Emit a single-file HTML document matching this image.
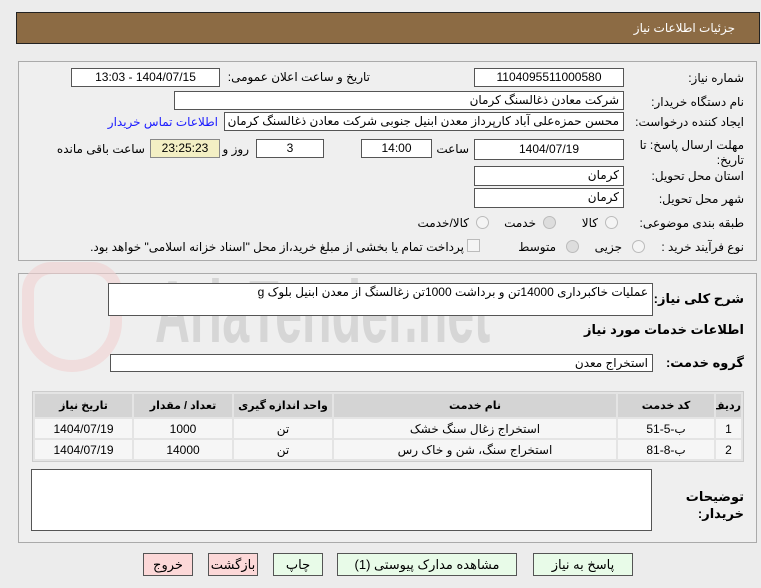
<!DOCTYPE html>
<html><head><meta charset="utf-8"><style>
body{margin:0;width:761px;height:588px;background:#ececec;font-family:"Liberation Sans","DejaVu Sans",sans-serif;font-size:12px;color:#000;position:relative;overflow:hidden;direction:rtl}
.a{position:absolute;white-space:nowrap}
.box{position:absolute;background:#fff;border:1px solid #555;box-sizing:border-box;font-size:12px;line-height:16px;padding:0 4px;white-space:nowrap;overflow:hidden}
.c{text-align:center}
.lbl{position:absolute;white-space:nowrap;font-size:12px}
.rad{position:absolute;width:11px;height:11px;border-radius:50%;border:1px solid #bbb;background:#f4f4f4}
table{border-collapse:separate;border-spacing:2px;position:absolute;left:32px;top:391px;width:712px;background:#e4e4e4;border:1px solid #ccc;table-layout:fixed}
th{background:#d4d4d4;height:23px;font-size:11px;white-space:nowrap;overflow:hidden;padding:0}
td{background:#f6f6f6;height:19px;text-align:center;font-size:12px;padding:0}
.btn{position:absolute;top:553px;height:23px;border:1px solid #555;box-sizing:border-box;font-size:13px;text-align:center;line-height:21px;background:#e8fbe8}
</style></head><body>
<div class="a" style="left:16px;top:12px;width:744px;height:32px;background:#8c6b44;border:1px solid #222;box-sizing:border-box"></div>
<div class="a" style="right:26px;top:21px;color:#fff;font-size:12px">جزئیات اطلاعات نیاز</div>

<div class="a" style="left:18px;top:61px;width:739px;height:200px;border:1px solid #aaa;background:#efefef;box-sizing:border-box"></div>
<div class="lbl" style="right:17px;top:71px">شماره نیاز:</div>
<div class="box c" style="left:474px;top:68px;width:150px;height:19px">1104095511000580</div>
<div class="lbl" style="right:391px;top:70px">تاریخ و ساعت اعلان عمومی:</div>
<div class="box c" style="left:71px;top:68px;width:149px;height:19px">1404/07/15 - 13:03</div>
<div class="lbl" style="right:17px;top:95px">نام دستگاه خریدار:</div>
<div class="box" style="left:174px;top:91px;width:450px;height:19px">شرکت معادن ذغالسنگ کرمان</div>
<div class="lbl" style="right:17px;top:115px">ایجاد کننده درخواست:</div>
<div class="box" style="left:224px;top:112px;width:400px;height:19px">محسن حمزه‌علی آباد کارپرداز معدن ابنیل جنوبی شرکت معادن ذغالسنگ کرمان</div>
<div class="lbl" style="right:543px;top:115px;color:#1a1aff">اطلاعات تماس خریدار</div>
<div class="lbl" style="right:17px;top:138px;line-height:15px">مهلت ارسال پاسخ: تا<br>تاریخ:</div>
<div class="box c" style="left:474px;top:139px;width:150px;height:21px;line-height:19px">1404/07/19</div>
<div class="lbl" style="right:292px;top:142px">ساعت</div>
<div class="box c" style="left:361px;top:139px;width:71px;height:19px">14:00</div>
<div class="box c" style="left:256px;top:139px;width:68px;height:19px">3</div>
<div class="lbl" style="right:512px;top:142px">روز و</div>
<div class="box c" style="left:150px;top:139px;width:70px;height:19px;background:#f3efc4;border-color:#888">23:25:23</div>
<div class="lbl" style="right:616px;top:142px">ساعت باقی مانده</div>
<div class="lbl" style="right:17px;top:169px">استان محل تحویل:</div>
<div class="box" style="left:474px;top:166px;width:150px;height:20px">کرمان</div>
<div class="lbl" style="right:17px;top:192px">شهر محل تحویل:</div>
<div class="box" style="left:474px;top:188px;width:150px;height:20px">کرمان</div>
<div class="lbl" style="right:17px;top:216px">طبقه بندی موضوعی:</div>
<div class="rad" style="left:605px;top:216px"></div><div class="lbl" style="right:163px;top:216px">کالا</div>
<div class="rad" style="left:543px;top:216px;background:#ddd"></div><div class="lbl" style="right:225px;top:216px">خدمت</div>
<div class="rad" style="left:476px;top:216px"></div><div class="lbl" style="right:292px;top:216px">کالا/خدمت</div>
<div class="lbl" style="right:17px;top:240px">نوع فرآیند خرید :</div>
<div class="rad" style="left:632px;top:240px"></div><div class="lbl" style="right:139px;top:240px">جزیی</div>
<div class="rad" style="left:566px;top:240px;background:#ddd"></div><div class="lbl" style="right:205px;top:240px">متوسط</div>
<div class="a" style="left:467px;top:239px;width:11px;height:11px;border:1px solid #bbb;background:#f4f4f4"></div>
<div class="lbl" style="right:297px;top:240px">پرداخت تمام یا بخشی از مبلغ خرید،از محل "اسناد خزانه اسلامی" خواهد بود.</div>

<div class="a" style="left:18px;top:273px;width:739px;height:270px;border:1px solid #aaa;background:#efefef;box-sizing:border-box"></div>
<div class="a" style="left:155px;top:262px;font-size:88px;color:#d6d6d6;font-weight:bold;direction:ltr;transform:scaleX(0.55);transform-origin:left top;line-height:100px">AriaTender.net</div>
<div class="a" style="left:22px;top:262px;width:100px;height:110px;border:12px solid #f0d0d0;border-radius:30px 30px 50px 50px;box-sizing:border-box;opacity:.6"></div>
<div class="lbl" style="right:17px;top:291px;font-weight:bold;font-size:13px">شرح کلی نیاز:</div>
<div class="box" style="left:108px;top:283px;width:545px;height:33px">عملیات خاکبرداری 14000تن و برداشت 1000تن زغالسنگ از معدن ابنیل بلوک g</div>
<div class="lbl" style="right:17px;top:322px;font-weight:bold;font-size:13px">اطلاعات خدمات مورد نیاز</div>
<div class="lbl" style="right:17px;top:355px;font-weight:bold;font-size:13px">گروه خدمت:</div>
<div class="box" style="left:110px;top:354px;width:543px;height:18px">استخراج معدن</div>
<table>
<colgroup><col style="width:25px"><col style="width:96px"><col style="width:282px"><col style="width:98px"><col style="width:98px"><col></colgroup>
<tr><th>ردیف</th><th>کد خدمت</th><th>نام خدمت</th><th>واحد اندازه گیری</th><th>تعداد / مقدار</th><th>تاریخ نیاز</th></tr>
<tr><td>1</td><td>ب-5-51</td><td>استخراج زغال سنگ خشک</td><td>تن</td><td>1000</td><td>1404/07/19</td></tr>
<tr><td>2</td><td>ب-8-81</td><td>استخراج سنگ، شن و خاک رس</td><td>تن</td><td>14000</td><td>1404/07/19</td></tr>
</table>
<div class="lbl" style="right:17px;top:488px;font-weight:bold;font-size:13px;line-height:17px">توضیحات<br>خریدار:</div>
<div class="box" style="left:31px;top:469px;width:621px;height:62px"></div>

<div class="btn" style="left:533px;width:100px">پاسخ به نیاز</div>
<div class="btn" style="left:337px;width:180px">مشاهده مدارک پیوستی (1)</div>
<div class="btn" style="left:273px;width:50px">چاپ</div>
<div class="btn" style="left:208px;width:50px;background:#fcd8d8">بازگشت</div>
<div class="btn" style="left:143px;width:50px;background:#fcd8d8">خروج</div>
</body></html>
